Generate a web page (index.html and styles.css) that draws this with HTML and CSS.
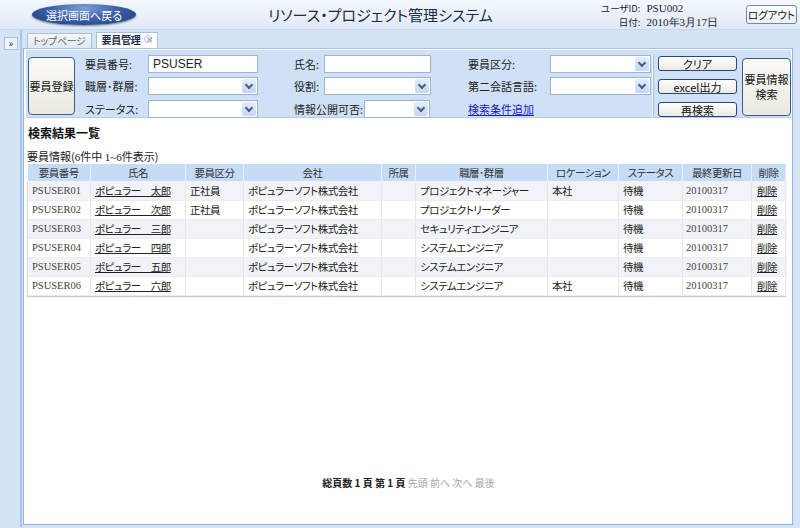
FILE: index.html
```html
<!doctype html>
<html lang="ja">
  <head>
    <meta charset="UTF-8" />
    <title>リソース・プロジェクト管理システム</title>
    <link rel="stylesheet" href="styles.css">
  </head>
  <body>
    <header class="top">
      <a class="back-btn" href="#">選択画面へ戻る</a>
      <h1 class="app-title">リソース・プロジェクト管理システム</h1>
      <div class="user-info">
        <span class="k">ユーザID:</span><span class="v">PSU002</span>
        <span class="k">日付:</span><span class="v">2010年3月17日</span>
      </div>
      <button class="logout">ログアウト</button>
    </header>

    <div class="layout">
      <aside class="sidebar">
        <button class="expand">»</button>
      </aside>

      <main class="main">
        <nav class="tabs">
          <span class="tab">トップページ</span>
          <span class="tab active">要員管理 <span class="tab-close">×</span></span>
        </nav>

        <div class="panel">
          <!-- search conditions -->
          <form class="search">
            <button type="button" class="big-btn reg">要員登録</button>

            <div class="col col-b">
              <div class="row"><label>要員番号:</label><span class="input w110">PSUSER</span></div>
              <div class="row"><label>職層･群層:</label><span class="select w110"><i></i></span></div>
              <div class="row"><label>ステータス:</label><span class="select w110"><i></i></span></div>
            </div>

            <div class="col col-c">
              <div class="row"><label class="lw30">氏名:</label><span class="input w107"></span></div>
              <div class="row"><label class="lw30">役割:</label><span class="select w107"><i></i></span></div>
              <div class="row"><label class="lw70">情報公開可否:</label><span class="select w66"><i></i></span></div>
            </div>

            <div class="col col-d">
              <div class="row"><label class="lw82">要員区分:</label><span class="select w101"><i></i></span></div>
              <div class="row"><label class="lw82">第二会話言語:</label><span class="select w101"><i></i></span></div>
              <div class="row"><a class="add-link" href="#">検索条件追加</a></div>
            </div>

            <div class="col col-e">
              <button type="button" class="sm-btn">クリア</button>
              <button type="button" class="sm-btn">excel出力</button>
              <button type="button" class="sm-btn">再検索</button>
            </div>

            <button type="button" class="big-btn find"><span>要員情報</span><span>検索</span></button>
          </form>

          <h2 class="result-title">検索結果一覧</h2>
          <div class="result-count">要員情報(<span class="num">6</span>件中 <span class="num">1~6</span>件表示)</div>

          <table class="grid">
            <colgroup>
              <col style="width:63px"><col style="width:95px"><col style="width:58px"><col style="width:138px">
              <col style="width:34px"><col style="width:132px"><col style="width:71px"><col style="width:64px">
              <col style="width:69px"><col style="width:34px">
            </colgroup>
            <thead>
              <tr>
                <th>要員番号</th><th>氏名</th><th>要員区分</th><th>会社</th><th>所属</th>
                <th>職層･群層</th><th>ロケーション</th><th>ステータス</th><th>最終更新日</th><th>削除</th>
              </tr>
            </thead>
            <tbody>
              <tr>
                <td class="num">PSUSER01</td><td><a href="#">ポピュラー　太郎</a></td><td>正社員</td><td>ポピュラーソフト株式会社</td><td></td>
                <td>プロジェクトマネージャー</td><td>本社</td><td>待機</td><td class="num">20100317</td><td><a href="#">削除</a></td>
              </tr>
              <tr>
                <td class="num">PSUSER02</td><td><a href="#">ポピュラー　次郎</a></td><td>正社員</td><td>ポピュラーソフト株式会社</td><td></td>
                <td>プロジェクトリーダー</td><td></td><td>待機</td><td class="num">20100317</td><td><a href="#">削除</a></td>
              </tr>
              <tr>
                <td class="num">PSUSER03</td><td><a href="#">ポピュラー　三郎</a></td><td></td><td>ポピュラーソフト株式会社</td><td></td>
                <td>セキュリティエンジニア</td><td></td><td>待機</td><td class="num">20100317</td><td><a href="#">削除</a></td>
              </tr>
              <tr>
                <td class="num">PSUSER04</td><td><a href="#">ポピュラー　四郎</a></td><td></td><td>ポピュラーソフト株式会社</td><td></td>
                <td>システムエンジニア</td><td></td><td>待機</td><td class="num">20100317</td><td><a href="#">削除</a></td>
              </tr>
              <tr>
                <td class="num">PSUSER05</td><td><a href="#">ポピュラー　五郎</a></td><td></td><td>ポピュラーソフト株式会社</td><td></td>
                <td>システムエンジニア</td><td></td><td>待機</td><td class="num">20100317</td><td><a href="#">削除</a></td>
              </tr>
              <tr>
                <td class="num">PSUSER06</td><td><a href="#">ポピュラー　六郎</a></td><td></td><td>ポピュラーソフト株式会社</td><td></td>
                <td>システムエンジニア</td><td>本社</td><td>待機</td><td class="num">20100317</td><td><a href="#">削除</a></td>
              </tr>
            </tbody>
          </table>

          <div class="pager">
            総頁数 1 頁 第 1 頁 <span class="off">先頭 前へ 次へ 最後</span>
          </div>
        </div>
      </main>
    </div>
  </body>
</html>
```

FILE: styles.css
```css
/* Base */
* {
  box-sizing: border-box;
}

body {
  margin: 0;
  width: 800px;
  height: 528px;
  overflow: hidden;
  font-family: "Noto Sans CJK JP", "Liberation Sans", sans-serif;
  font-feature-settings: "palt";
  font-size: 11px;
  color: #222;
  background: #d5e3f6;
}

button {
  font-family: inherit;
  font-feature-settings: "palt";
}

/* Header */
.top {
  display: flex;
  align-items: center;
  height: 30px;
  background: linear-gradient(#f5f8fd, #dfe9f7);
  border-bottom: 1px solid #c5d7ef;
}

.back-btn {
  display: flex;
  align-items: center;
  justify-content: center;
  margin-left: 32px;
  width: 104px;
  height: 21px;
  border-radius: 50%;
  background: radial-gradient(ellipse at 50% 20%, #7e9fd8 0%, #3d62a8 45%, #1c3b7e 100%);
  box-shadow: 0 1px 2px rgba(0, 0, 0, 0.45);
  color: #fff;
  font-size: 11px;
  text-decoration: none;
}

.app-title {
  margin: 0 0 0 132px;
  font-size: 15px;
  font-weight: normal;
  color: #1d2b48;
}

.user-info {
  display: grid;
  grid-template-columns: auto auto;
  column-gap: 6px;
  margin-left: auto;
  font-size: 9.5px;
  line-height: 14px;
  color: #223;
}

.user-info .k {
  text-align: right;
}

.user-info .v {
  font-family: "Liberation Serif", serif;
  font-size: 11px;
}

.logout {
  margin: 0 3px 0 28px;
  width: 51px;
  height: 19px;
  padding: 0;
  white-space: nowrap;
  font-size: 10.5px;
  background: linear-gradient(#ffffff, #eef1f6);
  border: 1px solid #6f87a8;
  border-radius: 3px;
  color: #111;
}

/* Body layout */
.layout {
  display: flex;
  height: 497px;
}

.sidebar {
  width: 22px;
  border-right: 2px solid #a9c4e8;
  padding: 4px 0 0 4px;
}

.expand {
  width: 14px;
  height: 13px;
  padding: 0;
  font-size: 10px;
  line-height: 10px;
  color: #335;
  background: #eef3fb;
  border: 1px solid #a8bfdf;
}

.main {
  display: flex;
  flex-direction: column;
  width: 774px;
}

/* Tabs */
.tabs {
  display: flex;
  align-items: flex-end;
  height: 18px;
  padding-left: 5px;
  gap: 4px;
}

.tab {
  height: 15px;
  padding: 0 5px;
  line-height: 14px;
  font-size: 10px;
  letter-spacing: -0.3px;
  color: #666;
  background: linear-gradient(#f4f7fc, #dfe8f5);
  border: 1px solid #a8bfe0;
  border-bottom: none;
}

.tab.active {
  height: 16px;
  font-weight: bold;
  color: #1b2a48;
  background: #fff;
}

.tab-close {
  display: inline-block;
  width: 8px;
  height: 8px;
  margin-left: 2px;
  line-height: 7px;
  font-size: 8px;
  text-align: center;
  color: #8796ad;
  border: 1px solid #b6c2d4;
  border-radius: 50%;
  vertical-align: 1px;
}

.panel {
  display: flex;
  flex-direction: column;
  flex: 1;
  margin-left: 1px;
  margin-right: 3px;
  margin-bottom: 2px;
  background: #fff;
  border: 1px solid #95b5e0;
  border-top: 1px solid #a6c1e6;
  padding: 1px 1px 0 2px;
}

/* Search form */
.search {
  display: flex;
  align-items: flex-start;
  height: 68px;
  margin: 0;
  padding-top: 5px;
  background: #d0e1f7;
  border-bottom: 1px solid #b3cbed;
}

.big-btn {
  height: 58px;
  padding: 0;
  font-size: 11px;
  line-height: 14px;
  color: #111;
  background: linear-gradient(#fbfaf7, #ece9e2);
  border: 1px solid #3e5b84;
  border-radius: 4px;
}

.big-btn.reg {
  width: 48px;
  margin: 2px 0 0 2px;
}

.big-btn.find {
  display: flex;
  flex-direction: column;
  align-items: center;
  justify-content: center;
  gap: 2px;
  width: 50px;
  margin: 3px 0 0 5px;
}

.big-btn.find span {
  display: block;
  height: 13px;
  line-height: 13px;
}

.col {
  display: flex;
  flex-direction: column;
  gap: 4px;
}

.col-b {
  margin-left: 10px;
}

.col-c {
  margin-left: 36px;
}

.col-d {
  margin-left: 37px;
}

.row {
  display: flex;
  align-items: center;
  height: 18px;
}

.row:nth-child(3) {
  margin-top: 1px;
}

.row label {
  width: 63px;
  color: #222;
}

.row label.lw30 { width: 30px; }
.row label.lw70 { width: 70px; }
.row label.lw82 { width: 82px; }

.input,
.select {
  position: relative;
  display: block;
  height: 18px;
  padding: 0 4px;
  line-height: 16px;
  font-family: "Liberation Sans", sans-serif;
  font-size: 12px;
  color: #222;
  background: #fff;
  border: 1px solid #9cb4d4;
}

.select i {
  position: absolute;
  top: 1px;
  right: 1px;
  bottom: 1px;
  width: 14px;
  background: linear-gradient(#e4edfc, #c4d6f6);
  border-radius: 2px;
}

.select i::after {
  content: "";
  position: absolute;
  left: 4px;
  top: 3px;
  width: 4px;
  height: 4px;
  border-right: 2px solid #4b5f86;
  border-bottom: 2px solid #4b5f86;
  transform: rotate(45deg);
}

.w110 { width: 110px; }
.w107 { width: 107px; }
.w101 { width: 101px; }
.w66 { width: 66px; }

.add-link {
  color: #1a1ac4;
  text-decoration: underline;
}

.col-e {
  gap: 8px;
  height: 63px;
  margin-left: 2px;
  padding-left: 4px;
  border-left: 1px solid #a8c2e6;
  box-shadow: -1px 0 0 #eef4fc;
}

.sm-btn {
  width: 79px;
  height: 15px;
  padding: 0;
  font-size: 11px;
  line-height: 12px;
  color: #111;
  background: linear-gradient(#ffffff, #ece9e2);
  border: 1px solid #24487a;
  border-radius: 3px;
}

.sm-btn:first-child {
  margin-top: 1px;
}

/* Results */
.result-title {
  margin: 6px 0 0 2px;
  font-size: 12px;
  font-weight: bold;
  color: #111;
}

.result-count {
  margin: 9px 0 0 1px;
  font-size: 11px;
  line-height: 13px;
}

.result-count .num {
  font-family: "Liberation Serif", serif;
}

.grid {
  width: 758px;
  margin-left: 1px;
  border-collapse: collapse;
  table-layout: fixed;
  font-size: 10.5px;
  letter-spacing: -0.5px;
  border-right: 1px solid #d4d4d4;
  box-shadow: 0 1px 1px #c9c9c9;
}

.grid th {
  height: 17px;
  padding: 0;
  font-weight: normal;
  color: #333;
  background: #c5dbf6;
  border-right: 1px solid #e6effb;
}

.grid td {
  height: 19px;
  padding: 0 0 0 4px;
  color: #222;
  white-space: nowrap;
  overflow: hidden;
  border-right: 1px solid #e6e6e6;
  border-bottom: 1px solid #ececec;
}

.grid td:first-child {
  border-left: 1px solid #dcdcdc;
}

.grid tbody tr:nth-child(odd) td {
  background: #f2f3f8;
}

.grid td.num {
  font-family: "Liberation Serif", serif;
  font-size: 10.5px;
  letter-spacing: 0;
  color: #444;
}

.grid td:nth-child(9) {
  padding-left: 3px;
}

.grid td:last-child {
  padding-left: 5px;
}

.grid a {
  color: #222;
  text-decoration: underline;
}

.pager {
  margin: auto 0 34px;
  text-align: center;
  font-size: 10px;
  font-weight: bold;
  color: #222;
}

.pager .off {
  font-weight: normal;
  color: #a7a7a7;
}
```
